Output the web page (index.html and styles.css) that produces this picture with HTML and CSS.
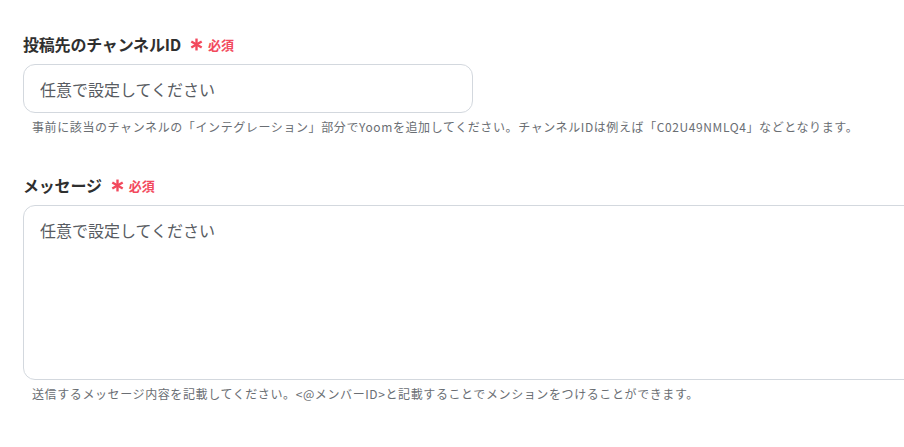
FILE: index.html
```html
<!DOCTYPE html>
<html lang="ja">
<head>
<meta charset="utf-8">
<link rel="stylesheet" href="styles.css">
</head>
<body>
<div class="page">
  <div class="field">
    <div class="label">
      <span class="label-text">投稿先のチャンネルID</span>
      <span class="required">
        <svg class="star" viewBox="0 0 12 12" width="13" height="13"><g stroke="currentColor" stroke-width="2.2" stroke-linecap="butt"><line x1="6" y1="0.5" x2="6" y2="11.5"/><line x1="1.2" y1="3.2" x2="10.8" y2="8.8"/><line x1="1.2" y1="8.8" x2="10.8" y2="3.2"/></g></svg>
        <span class="req-text">必須</span>
      </span>
    </div>
    <input class="input" type="text" placeholder="任意で設定してください">
    <p class="help">事前に該当のチャンネルの「インテグレーション」部分でYoomを追加してください。チャンネルIDは例えば「C02U49NMLQ4」などとなります。</p>
  </div>
  <div class="field">
    <div class="label">
      <span class="label-text">メッセージ</span>
      <span class="required">
        <svg class="star" viewBox="0 0 12 12" width="13" height="13"><g stroke="currentColor" stroke-width="2.2" stroke-linecap="butt"><line x1="6" y1="0.5" x2="6" y2="11.5"/><line x1="1.2" y1="3.2" x2="10.8" y2="8.8"/><line x1="1.2" y1="8.8" x2="10.8" y2="3.2"/></g></svg>
        <span class="req-text">必須</span>
      </span>
    </div>
    <div class="textarea-clip">
      <textarea class="textarea" placeholder="任意で設定してください"></textarea>
    </div>
    <p class="help">送信するメッセージ内容を記載してください。&lt;@メンバーID&gt;と記載することでメンションをつけることができます。</p>
  </div>
</div>
</body>
</html>
```

FILE: styles.css
```css
html, body {
  margin: 0;
  padding: 0;
  background: #ffffff;
  overflow: hidden;
}
body {
  font-family: "Noto Sans CJK JP", "Noto Sans", sans-serif;
  color: #333333;
}
.page {
  padding: 32px 0 0 23px;
  display: flex;
  flex-direction: column;
  gap: 37px;
}
.field {
  display: flex;
  flex-direction: column;
}
.label {
  display: flex;
  align-items: center;
  height: 24px;
  margin-bottom: 8px;
}
.label-text {
  font-size: 16px;
  font-weight: 700;
  color: #2f2f2f;
  letter-spacing: -0.2px;
}
.required {
  display: flex;
  align-items: center;
  margin-left: 9px;
  color: #f2495d;
}
.star {
  display: block;
}
.req-text {
  font-size: 13px;
  font-weight: 700;
  margin-left: 5px;
}
.input, .textarea {
  font-family: "Noto Sans CJK JP", "Noto Sans", sans-serif;
  font-size: 16px;
  color: #333;
  border: 1px solid #d3d8de;
  border-radius: 12px;
  background: #fff;
  box-sizing: border-box;
  outline: none;
  margin: 0;
}
.input::placeholder, .textarea::placeholder {
  color: #585c62;
  opacity: 1;
}
.input {
  width: 450px;
  height: 49px;
  padding: 0 16px;
}
.textarea-clip {
  overflow: hidden;
}
.textarea {
  width: calc(100% + 40px);
  height: 175px;
  padding: 12px 16px;
  resize: none;
  line-height: 24px;
  display: block;
}
.help {
  margin: 5px 0 0 9px;
  font-size: 12px;
  line-height: 18px;
  color: #6a6e73;
  letter-spacing: 0.6px;
  white-space: nowrap;
}
```
